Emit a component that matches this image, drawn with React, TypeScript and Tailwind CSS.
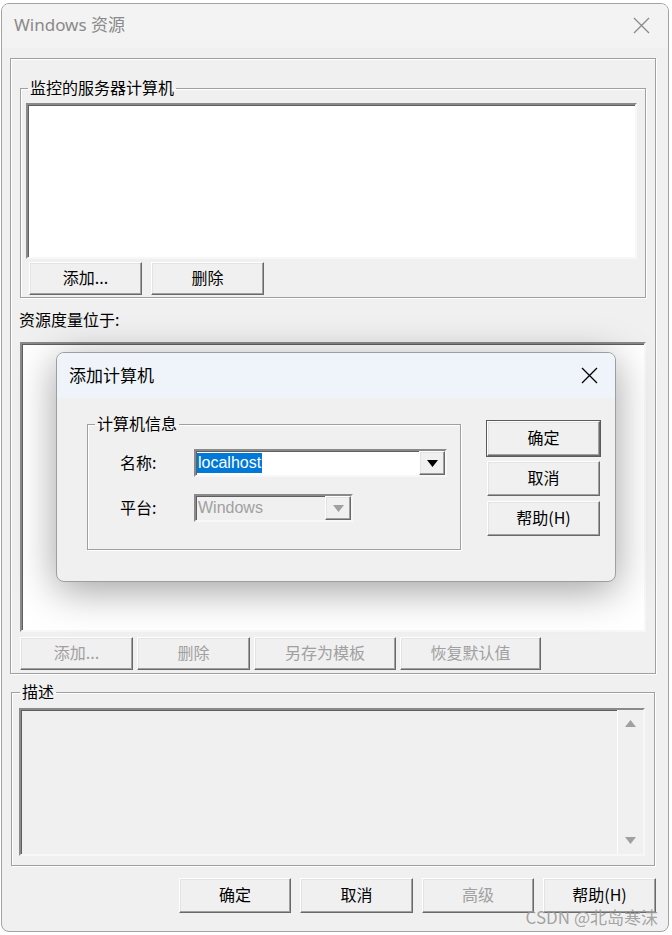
import type { ReactNode } from "react";

const raised =
  "border border-t-white border-l-white border-r-[#696969] border-b-[#696969] bg-[#f0f0f0] shadow-[inset_-1px_-1px_0_#a0a0a0,inset_1px_1px_0_#e3e3e3]";
const sunken =
  "border-2 border-t-[#8a8a8a] border-l-[#8a8a8a] border-r-[#f7f7f7] border-b-[#f7f7f7] shadow-[inset_1px_1px_0_#5f5f5f]";
const etched = "border border-[#a0a0a0] shadow-[inset_1px_1px_0_#fff,1px_1px_0_#fff]";

const Button = ({
  children,
  w,
  h = "h-[33px]",
  disabled,
  isDefault,
}: {
  children: ReactNode;
  w: string;
  h?: string;
  disabled?: boolean;
  isDefault?: boolean;
}) => (
  <div
    className={`${w} ${h} ${raised} flex shrink-0 items-center justify-center pb-[3px] ${
      disabled ? "text-[#a0a0a0]" : "text-black"
    } ${isDefault ? "outline outline-1 outline-[#5a5a5a]" : ""}`}
  >
    {children}
  </div>
);

const CloseIcon = ({ color, size = 17 }: { color: string; size?: number }) => (
  <svg width={size} height={size} viewBox="0 0 17 17" aria-hidden="true">
    <path d="M1 1 L16 16 M16 1 L1 16" stroke={color} strokeWidth={1.3} fill="none" />
  </svg>
);

const Triangle = ({ color, up }: { color: string; up?: boolean }) => (
  <svg width="11" height="7" viewBox="0 0 11 7" aria-hidden="true">
    <path d={up ? "M0 7 L5.5 0 L11 7 Z" : "M0 0 L11 0 L5.5 7 Z"} fill={color} />
  </svg>
);

const Legend = ({ children, ml }: { children: ReactNode; ml: string }) => (
  <legend className={`${ml} px-[2px] leading-[16px]`}>
    <span className="relative -top-[1px]">{children}</span>
  </legend>
);

const ComboBox = ({
  w,
  disabled,
  children,
}: {
  w: string;
  disabled?: boolean;
  children: ReactNode;
}) => (
  <div className={`${w} h-[28px] ${sunken} flex ${disabled ? "bg-[#f0f0f0]" : "bg-white"}`}>
    <div className="flex flex-1 items-center pl-[1px] font-['Liberation_Sans',sans-serif] text-[16px]">
      {children}
    </div>
    <div className={`w-[26px] ${raised} flex items-center justify-center`}>
      <Triangle color={disabled ? "#a0a0a0" : "#000"} />
    </div>
  </div>
);

export default function App() {
  return (
    <div className="relative h-[935px] w-[672px] overflow-hidden bg-white font-['Noto_Sans_CJK_SC',sans-serif] text-[16px] leading-[16px] text-black">
      <div className="ml-[1px] mt-[3px] flex h-[929px] w-[668px] flex-col overflow-hidden rounded-[8px] border border-[#a3a3a3] bg-[#f0f0f0]">
        {/* title bar */}
        <div className="flex h-[44px] shrink-0 items-center justify-between bg-[#f3f3f3] pb-[2px] pl-[12px] pr-[18px]">
          <span className="font-['Noto_Sans','Noto_Sans_CJK_SC',sans-serif] text-[17px] text-[#8a8a8a]">
            Windows 资源
          </span>
          <CloseIcon color="#8a8a8a" />
        </div>

        <div className="flex flex-col px-[8px] pt-[10px]">
          {/* main panel */}
          <div className={`flex h-[616px] w-[646px] flex-col ${etched}`}>
            <fieldset className={`ml-[9px] mt-[21px] h-[218px] w-[626px] ${etched}`}>
              <Legend ml="ml-[7px]">监控的服务器计算机</Legend>
              <div className={`ml-[5px] mt-[7px] h-[156px] w-[611px] bg-white ${sunken}`} />
              <div className="ml-[8px] mt-[3px] flex gap-[9px]">
                <Button w="w-[113px]">添加...</Button>
                <Button w="w-[113px]">删除</Button>
              </div>
            </fieldset>

            <div className="ml-[8px] mt-[13px]">资源度量位于:</div>
            <div className={`ml-[9px] mt-[15px] h-[290px] w-[626px] bg-white ${sunken}`} />
            <div className="ml-[9px] mt-[5px] flex gap-[4px]">
              <Button w="w-[113px]" disabled>
                添加...
              </Button>
              <Button w="w-[113px]" disabled>
                删除
              </Button>
              <Button w="w-[142px]" disabled>
                另存为模板
              </Button>
              <Button w="w-[141px]" disabled>
                恢复默认值
              </Button>
            </div>
          </div>

          {/* description */}
          <fieldset className={`ml-[1px] mt-[10px] h-[182px] w-[644px] ${etched}`}>
            <Legend ml="ml-[8px]">描述</Legend>
            <div className={`ml-[7px] mt-[8px] flex h-[148px] w-[626px] bg-[#f0f0f0] ${sunken}`}>
              <div className="flex-1" />
              <div className="flex w-[26px] flex-col items-center justify-between border-l border-white bg-[#f0f0f0] py-[10px]">
                <Triangle color="#a0a0a0" up />
                <Triangle color="#a0a0a0" />
              </div>
            </div>
          </fieldset>

          {/* bottom buttons */}
          <div className="ml-[169px] mt-[12px] flex gap-[9px]">
            <Button w="w-[112px]" h="h-[35px]">
              确定
            </Button>
            <Button w="w-[113px]" h="h-[35px]">
              取消
            </Button>
            <Button w="w-[112px]" h="h-[35px]" disabled>
              高级
            </Button>
            <Button w="w-[113px]" h="h-[35px]">
              帮助(H)
            </Button>
          </div>
        </div>
      </div>

      {/* modal dialog */}
      <div className="absolute left-[56px] top-[352px] flex h-[230px] w-[560px] flex-col overflow-hidden rounded-[8px] border border-[#9e9e9e] bg-[#f0f0f0] shadow-[0_8px_40px_rgba(0,0,0,0.38)]">
        <div className="flex h-[45px] shrink-0 items-center justify-between bg-[#eef4f9] pb-[1px] pl-[12px] pr-[17px]">
          <span className="text-[17px]">添加计算机</span>
          <CloseIcon color="#000" />
        </div>
        <div className="flex">
          <fieldset className={`ml-[30px] mt-[18px] h-[134px] w-[374px] ${etched}`}>
            <Legend ml="ml-[7px]">计算机信息</Legend>
            <div className="mt-[17px] flex items-center">
              <span className="ml-[32px] w-[74px] pb-[2px]">名称:</span>
              <ComboBox w="w-[253px]">
                <span className="bg-[#0078d7] px-[1px] leading-[20px] text-white">localhost</span>
              </ComboBox>
            </div>
            <div className="mt-[17px] flex items-center">
              <span className="ml-[32px] w-[74px] pb-[2px]">平台:</span>
              <ComboBox w="w-[159px]" disabled>
                <span className="px-[1px] text-[#a0a0a0]">Windows</span>
              </ComboBox>
            </div>
          </fieldset>
          <div className="ml-[26px] mt-[23px] flex flex-col gap-[5px]">
            <Button w="w-[113px]" h="h-[35px]" isDefault>
              确定
            </Button>
            <Button w="w-[113px]" h="h-[35px]">
              取消
            </Button>
            <Button w="w-[113px]" h="h-[35px]">
              帮助(H)
            </Button>
          </div>
        </div>
      </div>

      {/* watermark */}
      <div className="absolute right-[14px] top-[908px] text-[17px] leading-[18px] text-[#9a9a9a]/90">
        CSDN @北岛寒沫
      </div>
    </div>
  );
}
